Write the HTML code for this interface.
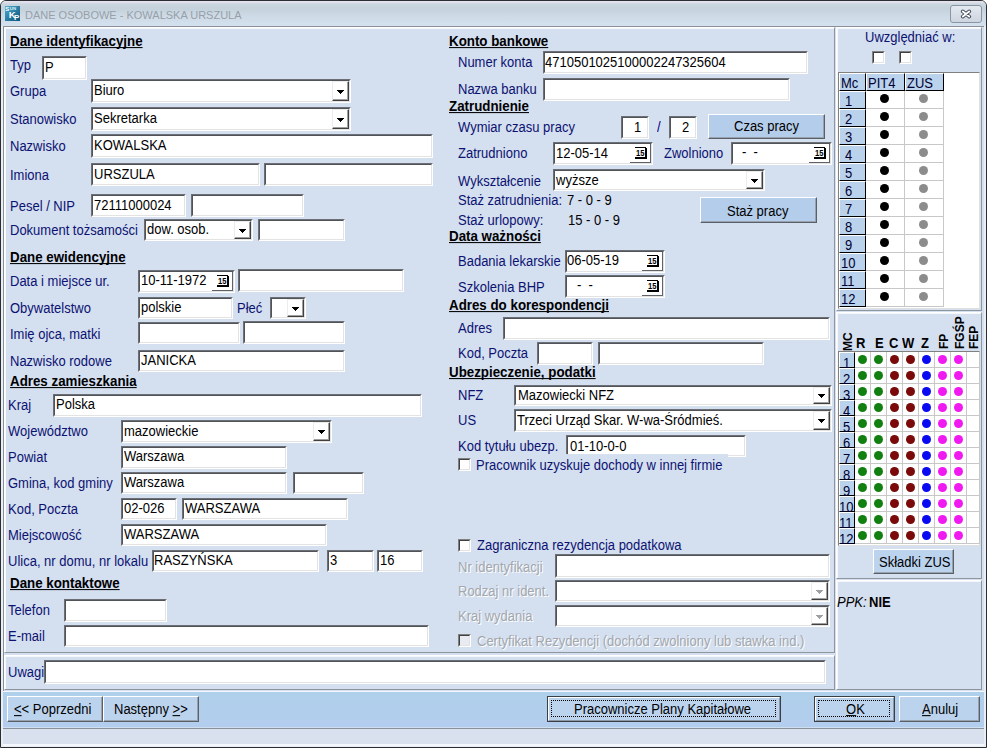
<!DOCTYPE html>
<html><head><meta charset="utf-8"><title>Dane osobowe</title><style>
*{margin:0;padding:0;box-sizing:border-box}
html,body{width:987px;height:748px;overflow:hidden;background:#fff}
body{position:relative;font-family:"Liberation Sans",sans-serif;font-size:13px}
div{position:absolute}
#win{left:0;top:0;width:987px;height:748px;background:#e9eef5;border:1px solid #2a2e33;border-radius:6px 6px 0 0}
#tb{left:1px;top:1px;width:985px;height:25px;background:linear-gradient(#e4e2ec 0px,#e4e2ec 1px,#c9d5df 3px,#c4d2dc 8px,#cedbe6 15px,#d3e0ee 25px);border-radius:5px 5px 0 0}
#ico{left:5px;top:6px;width:15px;height:15px;overflow:hidden}
#ico span{position:absolute;color:#fff;font-weight:bold;font-family:"Liberation Sans"}
#ico .i1{font-size:5px;left:1px;top:0px;letter-spacing:-0.3px}
#ico .i2{font-size:8px;left:4px;top:3px}
#ico .i3{font-size:7px;left:9px;top:7px}
#ttl{left:25px;top:8px;font-size:11px;line-height:15px;color:#979fa9;white-space:nowrap}
#cls{left:950px;top:5px;width:32px;height:18px;border:1px solid #8995a5;border-radius:3px;background:linear-gradient(#e4e9f0,#cdd5df);}
#cls svg{position:absolute;left:8px;top:3px}
#client{left:3px;top:26px;width:981px;height:720px;background:#d4dff0;border-top:1px solid #8a9099;border-left:1px solid #8a9099}
.pn{background:#d4dff0;border-top:1px solid #fff;border-left:1px solid #fff;border-right:1px solid #8f959c;border-bottom:1px solid #8f959c;box-shadow:inset 1px 1px 0 #f4f7fb}
#bbar{left:3px;top:691px;width:981px;height:37px;background:linear-gradient(#afd0ea,#b3cdee);border-top:1px solid #f4f7fb;border-bottom:1px solid #cfdff0}
#sbar{left:3px;top:728px;width:981px;height:18px;background:#d9e1ee;border-top:1px solid #8a9099;border-bottom:2px solid #f4f7fb}
.t,.h{white-space:nowrap;line-height:15px;font-size:13px;transform:scaleY(1.08);transform-origin:0 12px}
.h{transform:scaleY(1.05);font-weight:bold;font-size:13.33px;color:#000;text-decoration:underline;text-decoration-skip-ink:none;text-underline-offset:0.5px}
.dis{color:#a3a7ad !important;text-shadow:1px 1px 0 #fff}
.ed{border:1px solid;border-color:#6c7076 #fff #fff #6c7076}
.ed::before{content:"";position:absolute;left:0;top:0;right:0;bottom:0;border:1px solid;border-color:#505459 #e3e3e3 #e3e3e3 #505459}
.cbtn{background:#fff;border:1px solid;border-color:#ececec #404040 #404040 #ececec;box-shadow:inset -1px -1px 0 #a0a0a0}
.cbtn i{position:absolute;width:0;height:0;border-left:3.5px solid transparent;border-right:3.5px solid transparent;border-top:4px solid #000}
.cbtn.dis i{border-top-color:#a0a0a0}
.dbtn{background:#fff;border-right:1px solid #5f6368;border-bottom:1px solid #5f6368}
.cal{position:absolute}
.chk{width:13px;height:13px;border:1px solid;border-color:#808080 #fff #fff #808080}
.chk::before{content:"";position:absolute;left:0;top:0;right:0;bottom:0;border:1px solid;border-color:#404040 #e3e3e3 #e3e3e3 #404040}
.btn{border:1px solid;border-color:#fff #5a6068 #5a6068 #fff}
.btn::before{content:"";position:absolute;left:0;top:0;right:0;bottom:0;border-right:1px solid #98a2ae;border-bottom:1px solid #98a2ae}
.btn.focus{border-color:#3a3f45}
.btn.focus::before{border:1px solid;border-color:#fff #8e98a4 #8e98a4 #fff}
.frect{border:1px dotted #000}
.grid{background:#fff;border:1px solid;border-color:#808080 #e0e0e0 #e0e0e0 #808080}
.hc{background:#bad2ec;border:1px solid;border-color:#fff #000 #000 #fff}
.dc{border-right:1px solid #c8c8c8;border-bottom:1px solid #c8c8c8}
.dot{width:9px;height:9px;border-radius:50%}
.dot2{width:9px;height:9px;border-radius:50%}
.vb{font-weight:bold;font-size:12px;line-height:12px;color:#000;white-space:nowrap;transform-origin:0 0;transform:rotate(-90deg)}
</style></head>
<body>
<div id="win"></div>
<div id="tb"></div>
<div id="ico"><svg width="15" height="15" viewBox="0 0 15 15" font-family="Liberation Sans" font-weight="bold"><defs><linearGradient id="ig" x1="0" y1="0" x2="1" y2="1"><stop offset="0" stop-color="#5aaecb"/><stop offset="0.5" stop-color="#2a7ea6"/><stop offset="1" stop-color="#0c5478"/></linearGradient></defs><rect width="15" height="15" fill="url(#ig)"/><text x="0.3" y="4.9" font-size="6" fill="#fff">S</text><text x="4.8" y="4.3" font-size="4.4" fill="#d8f0f8">UN</text><text x="3.8" y="11.7" font-size="9.5" fill="#fff">K</text><text x="9" y="14.4" font-size="8" fill="#fff">P</text></svg></div>
<div id="ttl">DANE OSOBOWE - KOWALSKA URSZULA</div>
<div id="cls"><svg width="14" height="11" viewBox="0 0 14 11"><path d="M3.8 2.4 L10.2 7.6 M10.2 2.4 L3.8 7.6" stroke="#3c4654" stroke-width="3.8" stroke-linecap="round"/><path d="M3.8 2.4 L10.2 7.6 M10.2 2.4 L3.8 7.6" stroke="#fff" stroke-width="1.9" stroke-linecap="round"/></svg></div>
<div id="client"></div>
<div class="pn" style="left:4px;top:27px;width:831px;height:626px"></div>
<div class="pn" style="left:4px;top:655px;width:831px;height:35px"></div>
<div class="pn" style="left:836px;top:27px;width:146px;height:284px"></div>
<div class="pn" style="left:836px;top:312px;width:146px;height:267px"></div>
<div class="pn" style="left:836px;top:580px;width:146px;height:110px"></div>
<div id="bbar"></div>
<div id="sbar"></div>
<div class="h" style="left:10px;top:34px">Dane identyfikacyjne</div>
<div class="t" style="left:10px;top:58px;color:#0c1270;">Typ</div>
<div class="ed" style="left:42px;top:56px;width:45px;height:24px;background:#fff"></div>
<div class="t" style="left:45px;top:60px;color:#000;">P</div>
<div class="t" style="left:10px;top:84px;color:#0c1270;">Grupa</div>
<div class="ed" style="left:91px;top:79px;width:260px;height:24px;background:#fff"></div>
<div class="cbtn" style="left:332px;top:81px;width:17px;height:20px"><svg width="7" height="4" style="position:absolute;left:4px;top:8px"><path d="M0 0h7v1h-1v1h-1v1h-1v1h-1v-1h-1v-1h-1v-1h-1z" fill="#000"/></svg></div>
<div class="t" style="left:94px;top:83px;color:#000;">Biuro</div>
<div class="t" style="left:10px;top:112px;color:#0c1270;">Stanowisko</div>
<div class="ed" style="left:91px;top:107px;width:260px;height:24px;background:#fff"></div>
<div class="cbtn" style="left:332px;top:109px;width:17px;height:20px"><svg width="7" height="4" style="position:absolute;left:4px;top:8px"><path d="M0 0h7v1h-1v1h-1v1h-1v1h-1v-1h-1v-1h-1v-1h-1z" fill="#000"/></svg></div>
<div class="t" style="left:94px;top:111px;color:#000;">Sekretarka</div>
<div class="t" style="left:10px;top:139px;color:#0c1270;">Nazwisko</div>
<div class="ed" style="left:91px;top:134px;width:342px;height:24px;background:#fff"></div>
<div class="t" style="left:94px;top:138px;color:#000;">KOWALSKA</div>
<div class="t" style="left:10px;top:168px;color:#0c1270;">Imiona</div>
<div class="ed" style="left:91px;top:163px;width:169px;height:23px;background:#fff"></div>
<div class="t" style="left:94px;top:167px;color:#000;">URSZULA</div>
<div class="ed" style="left:264px;top:163px;width:169px;height:23px;background:#fff"></div>
<div class="t" style="left:10px;top:199px;color:#0c1270;">Pesel / NIP</div>
<div class="ed" style="left:91px;top:194px;width:95px;height:23px;background:#fff"></div>
<div class="t" style="left:94px;top:198px;color:#000;">72111000024</div>
<div class="ed" style="left:191px;top:194px;width:113px;height:23px;background:#fff"></div>
<div class="t" style="left:10px;top:223px;color:#0c1270;">Dokument tożsamości</div>
<div class="ed" style="left:144px;top:219px;width:109px;height:22px;background:#fff"></div>
<div class="cbtn" style="left:234px;top:221px;width:17px;height:18px"><svg width="7" height="4" style="position:absolute;left:4px;top:7px"><path d="M0 0h7v1h-1v1h-1v1h-1v1h-1v-1h-1v-1h-1v-1h-1z" fill="#000"/></svg></div>
<div class="t" style="left:147px;top:222px;color:#000;">dow. osob.</div>
<div class="ed" style="left:258px;top:219px;width:87px;height:22px;background:#fff"></div>
<div class="h" style="left:10px;top:250px">Dane ewidencyjne</div>
<div class="t" style="left:10px;top:274px;color:#0c1270;">Data i miejsce ur.</div>
<div class="ed" style="left:138px;top:270px;width:97px;height:23px;background:#fff"></div>
<div class="dbtn" style="left:212px;top:272px;width:21px;height:19px"><svg class="cal" width="13" height="13" viewBox="0 0 13 13" style="left:5px;top:3px"><rect x="0" y="0" width="11" height="1" fill="#000"/><rect x="10" y="1" width="2" height="11" fill="#000"/><rect x="0" y="10" width="12" height="2" fill="#000"/><text x="1" y="8.6" font-family="Liberation Sans" font-weight="bold" font-size="9.5" textLength="8.5" lengthAdjust="spacingAndGlyphs" fill="#000">15</text></svg></div>
<div class="t" style="left:141px;top:273px;color:#000;">10-11-1972</div>
<div class="ed" style="left:238px;top:269px;width:166px;height:23px;background:#fff"></div>
<div class="t" style="left:10px;top:301px;color:#0c1270;">Obywatelstwo</div>
<div class="ed" style="left:138px;top:297px;width:95px;height:22px;background:#fff"></div>
<div class="t" style="left:141px;top:300px;color:#000;">polskie</div>
<div class="t" style="left:237px;top:301px;color:#0c1270;">Płeć</div>
<div class="ed" style="left:270px;top:297px;width:36px;height:22px;background:#fff"></div>
<div class="cbtn" style="left:287px;top:299px;width:17px;height:18px"><svg width="7" height="4" style="position:absolute;left:4px;top:7px"><path d="M0 0h7v1h-1v1h-1v1h-1v1h-1v-1h-1v-1h-1v-1h-1z" fill="#000"/></svg></div>
<div class="t" style="left:10px;top:327px;color:#0c1270;">Imię ojca, matki</div>
<div class="ed" style="left:138px;top:322px;width:102px;height:22px;background:#fff"></div>
<div class="ed" style="left:243px;top:321px;width:102px;height:23px;background:#fff"></div>
<div class="t" style="left:10px;top:354px;color:#0c1270;">Nazwisko rodowe</div>
<div class="ed" style="left:138px;top:350px;width:207px;height:22px;background:#fff"></div>
<div class="t" style="left:141px;top:353px;color:#000;">JANICKA</div>
<div class="h" style="left:10px;top:374px">Adres zamieszkania</div>
<div class="t" style="left:8px;top:398px;color:#0c1270;">Kraj</div>
<div class="ed" style="left:53px;top:394px;width:369px;height:23px;background:#fff"></div>
<div class="t" style="left:56px;top:397px;color:#000;">Polska</div>
<div class="t" style="left:8px;top:424px;color:#0c1270;">Województwo</div>
<div class="ed" style="left:121px;top:420px;width:211px;height:23px;background:#fff"></div>
<div class="cbtn" style="left:313px;top:422px;width:17px;height:19px"><svg width="7" height="4" style="position:absolute;left:4px;top:7px"><path d="M0 0h7v1h-1v1h-1v1h-1v1h-1v-1h-1v-1h-1v-1h-1z" fill="#000"/></svg></div>
<div class="t" style="left:124px;top:424px;color:#000;">mazowieckie</div>
<div class="t" style="left:8px;top:450px;color:#0c1270;">Powiat</div>
<div class="ed" style="left:121px;top:446px;width:166px;height:23px;background:#fff"></div>
<div class="t" style="left:124px;top:449px;color:#000;">Warszawa</div>
<div class="t" style="left:8px;top:476px;color:#0c1270;">Gmina, kod gminy</div>
<div class="ed" style="left:121px;top:472px;width:166px;height:22px;background:#fff"></div>
<div class="t" style="left:124px;top:475px;color:#000;">Warszawa</div>
<div class="ed" style="left:293px;top:472px;width:71px;height:22px;background:#fff"></div>
<div class="t" style="left:8px;top:502px;color:#0c1270;">Kod, Poczta</div>
<div class="ed" style="left:121px;top:498px;width:56px;height:22px;background:#fff"></div>
<div class="t" style="left:124px;top:501px;color:#000;">02-026</div>
<div class="ed" style="left:182px;top:498px;width:166px;height:22px;background:#fff"></div>
<div class="t" style="left:185px;top:501px;color:#000;">WARSZAWA</div>
<div class="t" style="left:8px;top:528px;color:#0c1270;">Miejscowość</div>
<div class="ed" style="left:121px;top:524px;width:206px;height:22px;background:#fff"></div>
<div class="t" style="left:124px;top:527px;color:#000;">WARSZAWA</div>
<div class="t" style="left:8px;top:554px;color:#0c1270;">Ulica, nr domu, nr lokalu</div>
<div class="ed" style="left:152px;top:550px;width:167px;height:22px;background:#fff"></div>
<div class="t" style="left:154px;top:553px;color:#000;">RASZYŃSKA</div>
<div class="ed" style="left:327px;top:550px;width:47px;height:22px;background:#fff"></div>
<div class="t" style="left:330px;top:553px;color:#000;">3</div>
<div class="ed" style="left:377px;top:550px;width:46px;height:22px;background:#fff"></div>
<div class="t" style="left:380px;top:553px;color:#000;">16</div>
<div class="h" style="left:10px;top:576px">Dane kontaktowe</div>
<div class="t" style="left:8px;top:603px;color:#0c1270;">Telefon</div>
<div class="ed" style="left:64px;top:599px;width:103px;height:23px;background:#fff"></div>
<div class="t" style="left:8px;top:629px;color:#0c1270;">E-mail</div>
<div class="ed" style="left:64px;top:625px;width:365px;height:22px;background:#fff"></div>
<div class="t" style="left:8px;top:665px;color:#0c1270;">Uwagi</div>
<div class="ed" style="left:44px;top:660px;width:782px;height:24px;background:#fff"></div>
<div class="h" style="left:449px;top:34px">Konto bankowe</div>
<div class="t" style="left:458px;top:55px;color:#0c1270;">Numer konta</div>
<div class="ed" style="left:543px;top:51px;width:265px;height:23px;background:#fff"></div>
<div class="t" style="left:545px;top:55px;color:#000;">4710501025100002247325604</div>
<div class="t" style="left:458px;top:82px;color:#0c1270;">Nazwa banku</div>
<div class="ed" style="left:543px;top:78px;width:247px;height:23px;background:#fff"></div>
<div class="h" style="left:449px;top:99px">Zatrudnienie</div>
<div class="t" style="left:458px;top:120px;color:#0c1270;">Wymiar czasu pracy</div>
<div class="ed" style="left:621px;top:116px;width:28px;height:23px;background:#fff"></div>
<div class="t" style="left:634px;top:120px;color:#000;">1</div>
<div class="t" style="left:657px;top:120px;color:#000080;">/</div>
<div class="ed" style="left:669px;top:116px;width:28px;height:23px;background:#fff"></div>
<div class="t" style="left:682px;top:120px;color:#000;">2</div>
<div class="btn" style="left:708px;top:114px;width:117px;height:25px;background:#b4cdea"></div>
<div class="t" style="left:734px;top:119px;color:#000;color:#000">Czas pracy</div>
<div class="t" style="left:458px;top:146px;color:#0c1270;">Zatrudniono</div>
<div class="ed" style="left:553px;top:142px;width:100px;height:23px;background:#fff"></div>
<div class="dbtn" style="left:630px;top:144px;width:21px;height:19px"><svg class="cal" width="13" height="13" viewBox="0 0 13 13" style="left:5px;top:3px"><rect x="0" y="0" width="11" height="1" fill="#000"/><rect x="10" y="1" width="2" height="11" fill="#000"/><rect x="0" y="10" width="12" height="2" fill="#000"/><text x="1" y="8.6" font-family="Liberation Sans" font-weight="bold" font-size="9.5" textLength="8.5" lengthAdjust="spacingAndGlyphs" fill="#000">15</text></svg></div>
<div class="t" style="left:556px;top:146px;color:#000;">12-05-14</div>
<div class="t" style="left:664px;top:146px;color:#0c1270;">Zwolniono</div>
<div class="ed" style="left:731px;top:142px;width:101px;height:23px;background:#fff"></div>
<div class="dbtn" style="left:809px;top:144px;width:21px;height:19px"><svg class="cal" width="13" height="13" viewBox="0 0 13 13" style="left:5px;top:3px"><rect x="0" y="0" width="11" height="1" fill="#000"/><rect x="10" y="1" width="2" height="11" fill="#000"/><rect x="0" y="10" width="12" height="2" fill="#000"/><text x="1" y="8.6" font-family="Liberation Sans" font-weight="bold" font-size="9.5" textLength="8.5" lengthAdjust="spacingAndGlyphs" fill="#000">15</text></svg></div>
<div class="t" style="left:742px;top:145px;color:#000;">-&nbsp;&nbsp;-</div>
<div class="t" style="left:458px;top:174px;color:#0c1270;">Wykształcenie</div>
<div class="ed" style="left:553px;top:169px;width:212px;height:22px;background:#fff"></div>
<div class="cbtn" style="left:746px;top:171px;width:17px;height:18px"><svg width="7" height="4" style="position:absolute;left:4px;top:7px"><path d="M0 0h7v1h-1v1h-1v1h-1v1h-1v-1h-1v-1h-1v-1h-1z" fill="#000"/></svg></div>
<div class="t" style="left:556px;top:173px;color:#000;">wyższe</div>
<div class="t" style="left:458px;top:193px;color:#0c1270;">Staż zatrudnienia:</div>
<div class="t" style="left:567px;top:193px;color:#000;">7 - 0 - 9</div>
<div class="btn" style="left:700px;top:197px;width:117px;height:26px;background:#b4cdea"></div>
<div class="t" style="left:727px;top:204px;color:#000;color:#000">Staż pracy</div>
<div class="t" style="left:458px;top:213px;color:#0c1270;">Staż urlopowy:</div>
<div class="t" style="left:568px;top:213px;color:#000;">15 - 0 - 9</div>
<div class="h" style="left:449px;top:229px">Data ważności</div>
<div class="t" style="left:458px;top:254px;color:#0c1270;">Badania lekarskie</div>
<div class="ed" style="left:565px;top:250px;width:100px;height:23px;background:#fff"></div>
<div class="dbtn" style="left:642px;top:252px;width:21px;height:19px"><svg class="cal" width="13" height="13" viewBox="0 0 13 13" style="left:5px;top:3px"><rect x="0" y="0" width="11" height="1" fill="#000"/><rect x="10" y="1" width="2" height="11" fill="#000"/><rect x="0" y="10" width="12" height="2" fill="#000"/><text x="1" y="8.6" font-family="Liberation Sans" font-weight="bold" font-size="9.5" textLength="8.5" lengthAdjust="spacingAndGlyphs" fill="#000">15</text></svg></div>
<div class="t" style="left:567px;top:253px;color:#000;">06-05-19</div>
<div class="t" style="left:458px;top:280px;color:#0c1270;">Szkolenia BHP</div>
<div class="ed" style="left:565px;top:275px;width:100px;height:23px;background:#fff"></div>
<div class="dbtn" style="left:642px;top:277px;width:21px;height:19px"><svg class="cal" width="13" height="13" viewBox="0 0 13 13" style="left:5px;top:3px"><rect x="0" y="0" width="11" height="1" fill="#000"/><rect x="10" y="1" width="2" height="11" fill="#000"/><rect x="0" y="10" width="12" height="2" fill="#000"/><text x="1" y="8.6" font-family="Liberation Sans" font-weight="bold" font-size="9.5" textLength="8.5" lengthAdjust="spacingAndGlyphs" fill="#000">15</text></svg></div>
<div class="t" style="left:577px;top:278px;color:#000;">-&nbsp;&nbsp;-</div>
<div class="h" style="left:449px;top:298px">Adres do korespondencji</div>
<div class="t" style="left:458px;top:321px;color:#0c1270;">Adres</div>
<div class="ed" style="left:503px;top:317px;width:327px;height:23px;background:#fff"></div>
<div class="t" style="left:458px;top:346px;color:#0c1270;">Kod, Poczta</div>
<div class="ed" style="left:537px;top:342px;width:56px;height:23px;background:#fff"></div>
<div class="ed" style="left:598px;top:342px;width:166px;height:23px;background:#fff"></div>
<div class="h" style="left:449px;top:365px">Ubezpieczenie, podatki</div>
<div class="t" style="left:458px;top:388px;color:#0c1270;">NFZ</div>
<div class="ed" style="left:514px;top:385px;width:318px;height:21px;background:#fff"></div>
<div class="cbtn" style="left:813px;top:387px;width:17px;height:17px"><svg width="7" height="4" style="position:absolute;left:4px;top:6px"><path d="M0 0h7v1h-1v1h-1v1h-1v1h-1v-1h-1v-1h-1v-1h-1z" fill="#000"/></svg></div>
<div class="t" style="left:518px;top:388px;color:#000;">Mazowiecki NFZ</div>
<div class="t" style="left:458px;top:413px;color:#0c1270;">US</div>
<div class="ed" style="left:514px;top:409px;width:318px;height:23px;background:#fff"></div>
<div class="cbtn" style="left:813px;top:411px;width:17px;height:19px"><svg width="7" height="4" style="position:absolute;left:4px;top:7px"><path d="M0 0h7v1h-1v1h-1v1h-1v1h-1v-1h-1v-1h-1v-1h-1z" fill="#000"/></svg></div>
<div class="t" style="left:517px;top:413px;color:#000;">Trzeci Urząd Skar. W-wa-Śródmieś.</div>
<div class="t" style="left:458px;top:439px;color:#0c1270;">Kod tytułu ubezp.</div>
<div class="ed" style="left:566px;top:435px;width:180px;height:22px;background:#fff"></div>
<div class="t" style="left:570px;top:439px;color:#000;">01-10-0-0</div>
<div class="chk" style="left:458px;top:458px;background:#fff"></div>
<div class="t" style="left:476px;top:455px;padding-top:3px;padding-right:6px;color:#0c1270;background:#d4dff0;height:18px">Pracownik uzyskuje dochody w innej firmie</div>
<div class="chk" style="left:458px;top:539px;background:#fff"></div>
<div class="t" style="left:477px;top:538px;color:#0c1270;">Zagraniczna rezydencja podatkowa</div>
<div class="t dis" style="left:458px;top:560px">Nr identyfikacji</div>
<div class="ed" style="left:555px;top:554px;width:275px;height:24px;background:#fff"></div>
<div class="t dis" style="left:458px;top:584px">Rodzaj nr ident.</div>
<div class="ed" style="left:555px;top:580px;width:275px;height:22px;background:#fff"></div>
<div class="cbtn dis" style="left:811px;top:582px;width:17px;height:18px"><svg width="7" height="4" style="position:absolute;left:4px;top:7px"><path d="M0 0h7v1h-1v1h-1v1h-1v1h-1v-1h-1v-1h-1v-1h-1z" fill="#a0a0a0"/></svg></div>
<div class="t dis" style="left:458px;top:609px">Kraj wydania</div>
<div class="ed" style="left:555px;top:605px;width:275px;height:22px;background:#fff"></div>
<div class="cbtn dis" style="left:811px;top:607px;width:17px;height:18px"><svg width="7" height="4" style="position:absolute;left:4px;top:7px"><path d="M0 0h7v1h-1v1h-1v1h-1v1h-1v-1h-1v-1h-1v-1h-1z" fill="#a0a0a0"/></svg></div>
<div class="chk" style="left:458px;top:634px;background:#e8ecf2"></div>
<div class="t dis" style="left:477px;top:634px">Certyfikat Rezydencji (dochód zwolniony lub stawka ind.)</div>
<div class="t" style="left:865px;top:30px;color:#0c1270;">Uwzględniać w:</div>
<div class="chk" style="left:872px;top:51px;background:#fff"></div>
<div class="chk" style="left:899px;top:51px;background:#fff"></div>
<div class="grid" style="left:838px;top:72px;width:142px;height:237px"></div>
<div class="hc" style="left:839px;top:73px;width:27px;height:18px"></div>
<div class="t" style="left:841px;top:76px;color:#000030">Mc</div>
<div class="hc" style="left:866px;top:73px;width:39px;height:18px"></div>
<div class="t" style="left:868px;top:76px;color:#000030">PIT4</div>
<div class="hc" style="left:905px;top:73px;width:39px;height:18px"></div>
<div class="t" style="left:907px;top:76px;color:#000030">ZUS</div>
<div class="hc" style="left:839px;top:91px;width:27px;height:18px"></div>
<div class="t" style="left:845px;top:94px;color:#000030">1</div>
<div class="dc" style="left:866px;top:91px;width:39px;height:18px"></div>
<div class="dc" style="left:905px;top:91px;width:39px;height:18px"></div>
<div class="dot" style="left:880px;top:94px;background:#000"></div>
<div class="dot" style="left:919px;top:94px;background:#8c8c8c"></div>
<div class="hc" style="left:839px;top:109px;width:27px;height:18px"></div>
<div class="t" style="left:845px;top:112px;color:#000030">2</div>
<div class="dc" style="left:866px;top:109px;width:39px;height:18px"></div>
<div class="dc" style="left:905px;top:109px;width:39px;height:18px"></div>
<div class="dot" style="left:880px;top:112px;background:#000"></div>
<div class="dot" style="left:919px;top:112px;background:#8c8c8c"></div>
<div class="hc" style="left:839px;top:127px;width:27px;height:18px"></div>
<div class="t" style="left:845px;top:130px;color:#000030">3</div>
<div class="dc" style="left:866px;top:127px;width:39px;height:18px"></div>
<div class="dc" style="left:905px;top:127px;width:39px;height:18px"></div>
<div class="dot" style="left:880px;top:130px;background:#000"></div>
<div class="dot" style="left:919px;top:130px;background:#8c8c8c"></div>
<div class="hc" style="left:839px;top:145px;width:27px;height:18px"></div>
<div class="t" style="left:845px;top:148px;color:#000030">4</div>
<div class="dc" style="left:866px;top:145px;width:39px;height:18px"></div>
<div class="dc" style="left:905px;top:145px;width:39px;height:18px"></div>
<div class="dot" style="left:880px;top:148px;background:#000"></div>
<div class="dot" style="left:919px;top:148px;background:#8c8c8c"></div>
<div class="hc" style="left:839px;top:163px;width:27px;height:18px"></div>
<div class="t" style="left:845px;top:166px;color:#000030">5</div>
<div class="dc" style="left:866px;top:163px;width:39px;height:18px"></div>
<div class="dc" style="left:905px;top:163px;width:39px;height:18px"></div>
<div class="dot" style="left:880px;top:166px;background:#000"></div>
<div class="dot" style="left:919px;top:166px;background:#8c8c8c"></div>
<div class="hc" style="left:839px;top:181px;width:27px;height:18px"></div>
<div class="t" style="left:845px;top:184px;color:#000030">6</div>
<div class="dc" style="left:866px;top:181px;width:39px;height:18px"></div>
<div class="dc" style="left:905px;top:181px;width:39px;height:18px"></div>
<div class="dot" style="left:880px;top:184px;background:#000"></div>
<div class="dot" style="left:919px;top:184px;background:#8c8c8c"></div>
<div class="hc" style="left:839px;top:199px;width:27px;height:18px"></div>
<div class="t" style="left:845px;top:202px;color:#000030">7</div>
<div class="dc" style="left:866px;top:199px;width:39px;height:18px"></div>
<div class="dc" style="left:905px;top:199px;width:39px;height:18px"></div>
<div class="dot" style="left:880px;top:202px;background:#000"></div>
<div class="dot" style="left:919px;top:202px;background:#8c8c8c"></div>
<div class="hc" style="left:839px;top:217px;width:27px;height:18px"></div>
<div class="t" style="left:845px;top:220px;color:#000030">8</div>
<div class="dc" style="left:866px;top:217px;width:39px;height:18px"></div>
<div class="dc" style="left:905px;top:217px;width:39px;height:18px"></div>
<div class="dot" style="left:880px;top:220px;background:#000"></div>
<div class="dot" style="left:919px;top:220px;background:#8c8c8c"></div>
<div class="hc" style="left:839px;top:235px;width:27px;height:18px"></div>
<div class="t" style="left:845px;top:238px;color:#000030">9</div>
<div class="dc" style="left:866px;top:235px;width:39px;height:18px"></div>
<div class="dc" style="left:905px;top:235px;width:39px;height:18px"></div>
<div class="dot" style="left:880px;top:238px;background:#000"></div>
<div class="dot" style="left:919px;top:238px;background:#8c8c8c"></div>
<div class="hc" style="left:839px;top:253px;width:27px;height:18px"></div>
<div class="t" style="left:841px;top:256px;color:#000030">10</div>
<div class="dc" style="left:866px;top:253px;width:39px;height:18px"></div>
<div class="dc" style="left:905px;top:253px;width:39px;height:18px"></div>
<div class="dot" style="left:880px;top:256px;background:#000"></div>
<div class="dot" style="left:919px;top:256px;background:#8c8c8c"></div>
<div class="hc" style="left:839px;top:271px;width:27px;height:18px"></div>
<div class="t" style="left:841px;top:274px;color:#000030">11</div>
<div class="dc" style="left:866px;top:271px;width:39px;height:18px"></div>
<div class="dc" style="left:905px;top:271px;width:39px;height:18px"></div>
<div class="dot" style="left:880px;top:274px;background:#000"></div>
<div class="dot" style="left:919px;top:274px;background:#8c8c8c"></div>
<div class="hc" style="left:839px;top:289px;width:27px;height:18px"></div>
<div class="t" style="left:841px;top:292px;color:#000030">12</div>
<div class="dc" style="left:866px;top:289px;width:39px;height:18px"></div>
<div class="dc" style="left:905px;top:289px;width:39px;height:18px"></div>
<div class="dot" style="left:880px;top:292px;background:#000"></div>
<div class="dot" style="left:919px;top:292px;background:#8c8c8c"></div>
<div class="vb" style="left:842px;top:351px">MC</div>
<div class="t" style="left:856px;top:336px;font-weight:bold;color:#000">R</div>
<div class="t" style="left:875px;top:336px;font-weight:bold;color:#000">E</div>
<div class="t" style="left:889px;top:336px;font-weight:bold;color:#000">C</div>
<div class="t" style="left:902px;top:336px;font-weight:bold;color:#000">W</div>
<div class="t" style="left:921px;top:336px;font-weight:bold;color:#000">Z</div>
<div class="vb" style="left:938px;top:349px">FP</div>
<div class="vb" style="left:954px;top:349px">FGŚP</div>
<div class="vb" style="left:968px;top:349px">FEP</div>
<div class="grid" style="left:838px;top:351px;width:142px;height:195px"></div>
<div class="hc" style="left:839px;top:352px;width:16px;height:16px"></div>
<div class="t" style="left:843px;top:356px;color:#000030">1</div>
<div class="dc" style="left:855px;top:352px;width:16px;height:16px"></div>
<div class="dot2" style="left:858px;top:355px;background:#118011"></div>
<div class="dc" style="left:871px;top:352px;width:16px;height:16px"></div>
<div class="dot2" style="left:874px;top:355px;background:#118011"></div>
<div class="dc" style="left:887px;top:352px;width:16px;height:16px"></div>
<div class="dot2" style="left:890px;top:355px;background:#7a0a0a"></div>
<div class="dc" style="left:903px;top:352px;width:16px;height:16px"></div>
<div class="dot2" style="left:906px;top:355px;background:#7a0a0a"></div>
<div class="dc" style="left:919px;top:352px;width:16px;height:16px"></div>
<div class="dot2" style="left:922px;top:355px;background:#0a0af0"></div>
<div class="dc" style="left:935px;top:352px;width:16px;height:16px"></div>
<div class="dot2" style="left:938px;top:355px;background:#f01af0"></div>
<div class="dc" style="left:951px;top:352px;width:16px;height:16px"></div>
<div class="dot2" style="left:954px;top:355px;background:#f01af0"></div>
<div class="dc" style="left:967px;top:352px;width:13px;height:16px"></div>
<div class="hc" style="left:839px;top:368px;width:16px;height:16px"></div>
<div class="t" style="left:843px;top:372px;color:#000030">2</div>
<div class="dc" style="left:855px;top:368px;width:16px;height:16px"></div>
<div class="dot2" style="left:858px;top:371px;background:#118011"></div>
<div class="dc" style="left:871px;top:368px;width:16px;height:16px"></div>
<div class="dot2" style="left:874px;top:371px;background:#118011"></div>
<div class="dc" style="left:887px;top:368px;width:16px;height:16px"></div>
<div class="dot2" style="left:890px;top:371px;background:#7a0a0a"></div>
<div class="dc" style="left:903px;top:368px;width:16px;height:16px"></div>
<div class="dot2" style="left:906px;top:371px;background:#7a0a0a"></div>
<div class="dc" style="left:919px;top:368px;width:16px;height:16px"></div>
<div class="dot2" style="left:922px;top:371px;background:#0a0af0"></div>
<div class="dc" style="left:935px;top:368px;width:16px;height:16px"></div>
<div class="dot2" style="left:938px;top:371px;background:#f01af0"></div>
<div class="dc" style="left:951px;top:368px;width:16px;height:16px"></div>
<div class="dot2" style="left:954px;top:371px;background:#f01af0"></div>
<div class="dc" style="left:967px;top:368px;width:13px;height:16px"></div>
<div class="hc" style="left:839px;top:384px;width:16px;height:16px"></div>
<div class="t" style="left:843px;top:388px;color:#000030">3</div>
<div class="dc" style="left:855px;top:384px;width:16px;height:16px"></div>
<div class="dot2" style="left:858px;top:387px;background:#118011"></div>
<div class="dc" style="left:871px;top:384px;width:16px;height:16px"></div>
<div class="dot2" style="left:874px;top:387px;background:#118011"></div>
<div class="dc" style="left:887px;top:384px;width:16px;height:16px"></div>
<div class="dot2" style="left:890px;top:387px;background:#7a0a0a"></div>
<div class="dc" style="left:903px;top:384px;width:16px;height:16px"></div>
<div class="dot2" style="left:906px;top:387px;background:#7a0a0a"></div>
<div class="dc" style="left:919px;top:384px;width:16px;height:16px"></div>
<div class="dot2" style="left:922px;top:387px;background:#0a0af0"></div>
<div class="dc" style="left:935px;top:384px;width:16px;height:16px"></div>
<div class="dot2" style="left:938px;top:387px;background:#f01af0"></div>
<div class="dc" style="left:951px;top:384px;width:16px;height:16px"></div>
<div class="dot2" style="left:954px;top:387px;background:#f01af0"></div>
<div class="dc" style="left:967px;top:384px;width:13px;height:16px"></div>
<div class="hc" style="left:839px;top:400px;width:16px;height:16px"></div>
<div class="t" style="left:843px;top:404px;color:#000030">4</div>
<div class="dc" style="left:855px;top:400px;width:16px;height:16px"></div>
<div class="dot2" style="left:858px;top:403px;background:#118011"></div>
<div class="dc" style="left:871px;top:400px;width:16px;height:16px"></div>
<div class="dot2" style="left:874px;top:403px;background:#118011"></div>
<div class="dc" style="left:887px;top:400px;width:16px;height:16px"></div>
<div class="dot2" style="left:890px;top:403px;background:#7a0a0a"></div>
<div class="dc" style="left:903px;top:400px;width:16px;height:16px"></div>
<div class="dot2" style="left:906px;top:403px;background:#7a0a0a"></div>
<div class="dc" style="left:919px;top:400px;width:16px;height:16px"></div>
<div class="dot2" style="left:922px;top:403px;background:#0a0af0"></div>
<div class="dc" style="left:935px;top:400px;width:16px;height:16px"></div>
<div class="dot2" style="left:938px;top:403px;background:#f01af0"></div>
<div class="dc" style="left:951px;top:400px;width:16px;height:16px"></div>
<div class="dot2" style="left:954px;top:403px;background:#f01af0"></div>
<div class="dc" style="left:967px;top:400px;width:13px;height:16px"></div>
<div class="hc" style="left:839px;top:416px;width:16px;height:16px"></div>
<div class="t" style="left:843px;top:420px;color:#000030">5</div>
<div class="dc" style="left:855px;top:416px;width:16px;height:16px"></div>
<div class="dot2" style="left:858px;top:419px;background:#118011"></div>
<div class="dc" style="left:871px;top:416px;width:16px;height:16px"></div>
<div class="dot2" style="left:874px;top:419px;background:#118011"></div>
<div class="dc" style="left:887px;top:416px;width:16px;height:16px"></div>
<div class="dot2" style="left:890px;top:419px;background:#7a0a0a"></div>
<div class="dc" style="left:903px;top:416px;width:16px;height:16px"></div>
<div class="dot2" style="left:906px;top:419px;background:#7a0a0a"></div>
<div class="dc" style="left:919px;top:416px;width:16px;height:16px"></div>
<div class="dot2" style="left:922px;top:419px;background:#0a0af0"></div>
<div class="dc" style="left:935px;top:416px;width:16px;height:16px"></div>
<div class="dot2" style="left:938px;top:419px;background:#f01af0"></div>
<div class="dc" style="left:951px;top:416px;width:16px;height:16px"></div>
<div class="dot2" style="left:954px;top:419px;background:#f01af0"></div>
<div class="dc" style="left:967px;top:416px;width:13px;height:16px"></div>
<div class="hc" style="left:839px;top:432px;width:16px;height:16px"></div>
<div class="t" style="left:843px;top:436px;color:#000030">6</div>
<div class="dc" style="left:855px;top:432px;width:16px;height:16px"></div>
<div class="dot2" style="left:858px;top:435px;background:#118011"></div>
<div class="dc" style="left:871px;top:432px;width:16px;height:16px"></div>
<div class="dot2" style="left:874px;top:435px;background:#118011"></div>
<div class="dc" style="left:887px;top:432px;width:16px;height:16px"></div>
<div class="dot2" style="left:890px;top:435px;background:#7a0a0a"></div>
<div class="dc" style="left:903px;top:432px;width:16px;height:16px"></div>
<div class="dot2" style="left:906px;top:435px;background:#7a0a0a"></div>
<div class="dc" style="left:919px;top:432px;width:16px;height:16px"></div>
<div class="dot2" style="left:922px;top:435px;background:#0a0af0"></div>
<div class="dc" style="left:935px;top:432px;width:16px;height:16px"></div>
<div class="dot2" style="left:938px;top:435px;background:#f01af0"></div>
<div class="dc" style="left:951px;top:432px;width:16px;height:16px"></div>
<div class="dot2" style="left:954px;top:435px;background:#f01af0"></div>
<div class="dc" style="left:967px;top:432px;width:13px;height:16px"></div>
<div class="hc" style="left:839px;top:448px;width:16px;height:16px"></div>
<div class="t" style="left:843px;top:452px;color:#000030">7</div>
<div class="dc" style="left:855px;top:448px;width:16px;height:16px"></div>
<div class="dot2" style="left:858px;top:451px;background:#118011"></div>
<div class="dc" style="left:871px;top:448px;width:16px;height:16px"></div>
<div class="dot2" style="left:874px;top:451px;background:#118011"></div>
<div class="dc" style="left:887px;top:448px;width:16px;height:16px"></div>
<div class="dot2" style="left:890px;top:451px;background:#7a0a0a"></div>
<div class="dc" style="left:903px;top:448px;width:16px;height:16px"></div>
<div class="dot2" style="left:906px;top:451px;background:#7a0a0a"></div>
<div class="dc" style="left:919px;top:448px;width:16px;height:16px"></div>
<div class="dot2" style="left:922px;top:451px;background:#0a0af0"></div>
<div class="dc" style="left:935px;top:448px;width:16px;height:16px"></div>
<div class="dot2" style="left:938px;top:451px;background:#f01af0"></div>
<div class="dc" style="left:951px;top:448px;width:16px;height:16px"></div>
<div class="dot2" style="left:954px;top:451px;background:#f01af0"></div>
<div class="dc" style="left:967px;top:448px;width:13px;height:16px"></div>
<div class="hc" style="left:839px;top:464px;width:16px;height:16px"></div>
<div class="t" style="left:843px;top:468px;color:#000030">8</div>
<div class="dc" style="left:855px;top:464px;width:16px;height:16px"></div>
<div class="dot2" style="left:858px;top:467px;background:#118011"></div>
<div class="dc" style="left:871px;top:464px;width:16px;height:16px"></div>
<div class="dot2" style="left:874px;top:467px;background:#118011"></div>
<div class="dc" style="left:887px;top:464px;width:16px;height:16px"></div>
<div class="dot2" style="left:890px;top:467px;background:#7a0a0a"></div>
<div class="dc" style="left:903px;top:464px;width:16px;height:16px"></div>
<div class="dot2" style="left:906px;top:467px;background:#7a0a0a"></div>
<div class="dc" style="left:919px;top:464px;width:16px;height:16px"></div>
<div class="dot2" style="left:922px;top:467px;background:#0a0af0"></div>
<div class="dc" style="left:935px;top:464px;width:16px;height:16px"></div>
<div class="dot2" style="left:938px;top:467px;background:#f01af0"></div>
<div class="dc" style="left:951px;top:464px;width:16px;height:16px"></div>
<div class="dot2" style="left:954px;top:467px;background:#f01af0"></div>
<div class="dc" style="left:967px;top:464px;width:13px;height:16px"></div>
<div class="hc" style="left:839px;top:480px;width:16px;height:16px"></div>
<div class="t" style="left:843px;top:484px;color:#000030">9</div>
<div class="dc" style="left:855px;top:480px;width:16px;height:16px"></div>
<div class="dot2" style="left:858px;top:483px;background:#118011"></div>
<div class="dc" style="left:871px;top:480px;width:16px;height:16px"></div>
<div class="dot2" style="left:874px;top:483px;background:#118011"></div>
<div class="dc" style="left:887px;top:480px;width:16px;height:16px"></div>
<div class="dot2" style="left:890px;top:483px;background:#7a0a0a"></div>
<div class="dc" style="left:903px;top:480px;width:16px;height:16px"></div>
<div class="dot2" style="left:906px;top:483px;background:#7a0a0a"></div>
<div class="dc" style="left:919px;top:480px;width:16px;height:16px"></div>
<div class="dot2" style="left:922px;top:483px;background:#0a0af0"></div>
<div class="dc" style="left:935px;top:480px;width:16px;height:16px"></div>
<div class="dot2" style="left:938px;top:483px;background:#f01af0"></div>
<div class="dc" style="left:951px;top:480px;width:16px;height:16px"></div>
<div class="dot2" style="left:954px;top:483px;background:#f01af0"></div>
<div class="dc" style="left:967px;top:480px;width:13px;height:16px"></div>
<div class="hc" style="left:839px;top:496px;width:16px;height:16px"></div>
<div class="t" style="left:839px;top:500px;color:#000030">10</div>
<div class="dc" style="left:855px;top:496px;width:16px;height:16px"></div>
<div class="dot2" style="left:858px;top:499px;background:#118011"></div>
<div class="dc" style="left:871px;top:496px;width:16px;height:16px"></div>
<div class="dot2" style="left:874px;top:499px;background:#118011"></div>
<div class="dc" style="left:887px;top:496px;width:16px;height:16px"></div>
<div class="dot2" style="left:890px;top:499px;background:#7a0a0a"></div>
<div class="dc" style="left:903px;top:496px;width:16px;height:16px"></div>
<div class="dot2" style="left:906px;top:499px;background:#7a0a0a"></div>
<div class="dc" style="left:919px;top:496px;width:16px;height:16px"></div>
<div class="dot2" style="left:922px;top:499px;background:#0a0af0"></div>
<div class="dc" style="left:935px;top:496px;width:16px;height:16px"></div>
<div class="dot2" style="left:938px;top:499px;background:#f01af0"></div>
<div class="dc" style="left:951px;top:496px;width:16px;height:16px"></div>
<div class="dot2" style="left:954px;top:499px;background:#f01af0"></div>
<div class="dc" style="left:967px;top:496px;width:13px;height:16px"></div>
<div class="hc" style="left:839px;top:512px;width:16px;height:16px"></div>
<div class="t" style="left:839px;top:516px;color:#000030">11</div>
<div class="dc" style="left:855px;top:512px;width:16px;height:16px"></div>
<div class="dot2" style="left:858px;top:515px;background:#118011"></div>
<div class="dc" style="left:871px;top:512px;width:16px;height:16px"></div>
<div class="dot2" style="left:874px;top:515px;background:#118011"></div>
<div class="dc" style="left:887px;top:512px;width:16px;height:16px"></div>
<div class="dot2" style="left:890px;top:515px;background:#7a0a0a"></div>
<div class="dc" style="left:903px;top:512px;width:16px;height:16px"></div>
<div class="dot2" style="left:906px;top:515px;background:#7a0a0a"></div>
<div class="dc" style="left:919px;top:512px;width:16px;height:16px"></div>
<div class="dot2" style="left:922px;top:515px;background:#0a0af0"></div>
<div class="dc" style="left:935px;top:512px;width:16px;height:16px"></div>
<div class="dot2" style="left:938px;top:515px;background:#f01af0"></div>
<div class="dc" style="left:951px;top:512px;width:16px;height:16px"></div>
<div class="dot2" style="left:954px;top:515px;background:#f01af0"></div>
<div class="dc" style="left:967px;top:512px;width:13px;height:16px"></div>
<div class="hc" style="left:839px;top:528px;width:16px;height:16px"></div>
<div class="t" style="left:839px;top:532px;color:#000030">12</div>
<div class="dc" style="left:855px;top:528px;width:16px;height:16px"></div>
<div class="dot2" style="left:858px;top:531px;background:#118011"></div>
<div class="dc" style="left:871px;top:528px;width:16px;height:16px"></div>
<div class="dot2" style="left:874px;top:531px;background:#118011"></div>
<div class="dc" style="left:887px;top:528px;width:16px;height:16px"></div>
<div class="dot2" style="left:890px;top:531px;background:#7a0a0a"></div>
<div class="dc" style="left:903px;top:528px;width:16px;height:16px"></div>
<div class="dot2" style="left:906px;top:531px;background:#7a0a0a"></div>
<div class="dc" style="left:919px;top:528px;width:16px;height:16px"></div>
<div class="dot2" style="left:922px;top:531px;background:#0a0af0"></div>
<div class="dc" style="left:935px;top:528px;width:16px;height:16px"></div>
<div class="dot2" style="left:938px;top:531px;background:#f01af0"></div>
<div class="dc" style="left:951px;top:528px;width:16px;height:16px"></div>
<div class="dot2" style="left:954px;top:531px;background:#f01af0"></div>
<div class="dc" style="left:967px;top:528px;width:13px;height:16px"></div>
<div class="btn" style="left:873px;top:549px;width:81px;height:25px;background:#bcd3ee"></div>
<div class="t" style="left:879px;top:555px;color:#000;color:#000">Składki ZUS</div>
<div class="t" style="left:837px;top:595px;color:#000"><i>PPK:</i></div>
<div class="t" style="left:869px;top:595px;color:#000"><b>NIE</b></div>
<div class="btn" style="left:7px;top:696px;width:96px;height:26px;background:#bcd3ee"></div>
<div class="t" style="left:14px;top:702px;color:#000;color:#000"><u>&lt;</u>&lt; Poprzedni</div>
<div class="btn" style="left:103px;top:696px;width:96px;height:26px;background:#bcd3ee"></div>
<div class="t" style="left:114px;top:702px;color:#000;color:#000">Następny <u>&gt;</u>&gt;</div>
<div class="btn focus" style="left:547px;top:696px;width:234px;height:26px;background:#bcd3ee"></div>
<div class="frect" style="left:551px;top:700px;width:225px;height:17px"></div>
<div class="t" style="left:574px;top:702px;color:#000;color:#000">Pracownicze Plany Kapitałowe</div>
<div class="btn focus" style="left:814px;top:696px;width:81px;height:26px;background:#bcd3ee"></div>
<div class="frect" style="left:818px;top:700px;width:72px;height:17px"></div>
<div class="t" style="left:846px;top:702px;color:#000;color:#000"><u>O</u>K</div>
<div class="btn" style="left:899px;top:696px;width:81px;height:26px;background:#bcd3ee"></div>
<div class="t" style="left:922px;top:702px;color:#000;color:#000"><u>A</u>nuluj</div>
</body></html>
